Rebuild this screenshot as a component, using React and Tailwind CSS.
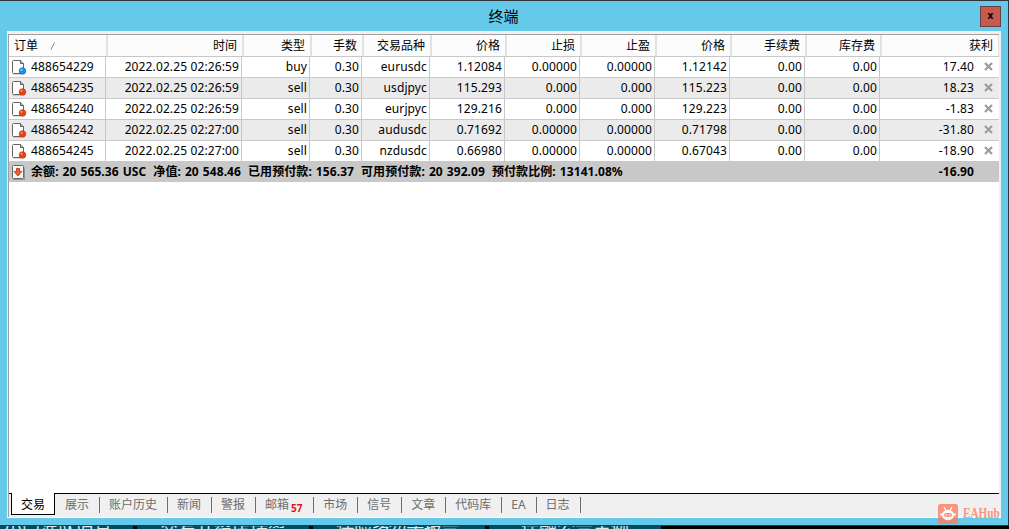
import React, { useState } from 'react';
import clsx from 'clsx';

const columns = [
  { label: '时间', width: 'w-[136px]' },
  { label: '类型', width: 'w-[68px]' },
  { label: '手数', width: 'w-[52px]' },
  { label: '交易品种', width: 'w-[68px]' },
  { label: '价格', width: 'w-[75px]' },
  { label: '止损', width: 'w-[75px]' },
  { label: '止盈', width: 'w-[75px]' },
  { label: '价格', width: 'w-[75px]' },
  { label: '手续费', width: 'w-[75px]' },
  { label: '库存费', width: 'w-[75px]' },
];

const orders = [
  { id: '488654229', values: ['2022.02.25 02:26:59', 'buy', '0.30', 'eurusdc', '1.12084', '0.00000', '0.00000', '1.12142', '0.00', '0.00'], profit: '17.40' },
  { id: '488654235', values: ['2022.02.25 02:26:59', 'sell', '0.30', 'usdjpyc', '115.293', '0.000', '0.000', '115.223', '0.00', '0.00'], profit: '18.23' },
  { id: '488654240', values: ['2022.02.25 02:26:59', 'sell', '0.30', 'eurjpyc', '129.216', '0.000', '0.000', '129.223', '0.00', '0.00'], profit: '-1.83' },
  { id: '488654242', values: ['2022.02.25 02:27:00', 'sell', '0.30', 'audusdc', '0.71692', '0.00000', '0.00000', '0.71798', '0.00', '0.00'], profit: '-31.80' },
  { id: '488654245', values: ['2022.02.25 02:27:00', 'sell', '0.30', 'nzdusdc', '0.66980', '0.00000', '0.00000', '0.67043', '0.00', '0.00'], profit: '-18.90' },
];

const summary = ['余额: 20 565.36 USC', '净值: 20 548.46', '已用预付款: 156.37', '可用预付款: 20 392.09', '预付款比例: 13141.08%'];

const tabs = ['交易', '展示', '账户历史', '新闻', '警报', '邮箱', '市场', '信号', '文章', '代码库', 'EA', '日志'];

const OrderIcon = ({ buy }) => (
  <svg width="16" height="18" viewBox="0 0 16 18" className="shrink-0">
    <path d="M2 16.500h8" stroke="#000" strokeOpacity="0.150" />
    <path d="M1.500 3.500q0-1 1-1h7l3 3v10h-10q-1 0-1-1z" fill="#fff" stroke="#666" strokeLinejoin="round" />
    <path d="M9.500 2.500v3h3" fill="#ccc" stroke="#555" />
    <circle cx="11.500" cy="13" r="3.300" fill={buy ? '#1e93e4' : '#e8430c'} stroke={buy ? '#1268a8' : '#b03a12'} strokeWidth="0.700" />
    <circle cx="10.500" cy="11.800" r="1.100" fill={buy ? '#8fd0fb' : '#ff9a70'} />
  </svg>
);

const BalanceIcon = () => (
  <svg width="16" height="16" viewBox="0 0 16 16" className="shrink-0">
    <path d="M2 15.500h11.500v-12" stroke="#000" strokeOpacity="0.250" fill="none" />
    <rect x="1.500" y="1.500" width="11" height="13" rx="1" fill="#f6f4f2" stroke="#666" />
    <path d="M5.500 4.500h3v3h2.300L7 12 3.200 7.500h2.300z" fill="#f0602c" stroke="#a8300a" strokeWidth="0.800" />
  </svg>
);

const CloseMark = () => (
  <svg width="9" height="9" viewBox="0 0 9 9" className="mb-px shrink-0">
    <path d="M1 1l7 7M8 1l-7 7" stroke="#9c9c9c" strokeWidth="2.200" />
  </svg>
);

const Watermark = () => (
  <div className="absolute left-[938px] top-[504px] flex items-center opacity-80">
    <svg width="20" height="20" viewBox="0 0 20 20">
      <rect width="20" height="20" rx="2.500" fill="#ff7d62" />
      <path d="M8 6.500L6.300 3.500M12 6.500L13.700 3.500" stroke="#fff" strokeWidth="1.300" strokeLinecap="round" />
      <ellipse cx="10" cy="11" rx="6" ry="5.300" fill="#fff" />
      <circle cx="3.500" cy="10.500" r="1.300" fill="#fff" />
      <circle cx="16.500" cy="10.500" r="1.300" fill="#fff" />
      <rect x="6" y="9" width="8" height="4" rx="2" fill="#ff7d62" />
      <circle cx="8.300" cy="11" r="0.800" fill="#fff" />
      <circle cx="11.700" cy="11" r="0.800" fill="#fff" />
    </svg>
    <span className="ml-[5px] origin-left scale-x-[0.8] font-['Liberation_Serif',serif] text-[14px] font-bold leading-5 text-[#ff7d62]">EAHub</span>
  </div>
);

const App = () => {
  const [activeTab, setActiveTab] = useState('交易');

  return (
    <div className="relative flex h-[529px] w-[1009px] flex-col overflow-hidden bg-black font-['Noto_Sans','Noto_Sans_CJK_SC',sans-serif] text-[12px] text-black">
      {/* Terminal window */}
      <div className="flex h-[526px] shrink-0 flex-col border-y border-r border-[#30343c] bg-[#65c9ea] px-[7px] pb-[7px]">
        <div className="flex h-[30px] shrink-0 items-center">
          <div className="w-[973px] pb-px pl-[20px] text-center text-[15px] leading-[28px]">终端</div>
          <button className="flex h-[21px] w-[21px] items-center justify-center border border-[#66413f] bg-[#c45a50] pb-[2px] text-[10px] font-bold leading-none">
            x
          </button>
        </div>

        <div className="flex min-h-0 flex-1 flex-col border-b border-l border-white border-l-[#f0f0f0] bg-[#f0f0f0] pr-[2px] pt-[3px]">
          <div className="flex min-h-0 flex-1 flex-col border-l border-t border-[#a0a0a0] bg-white">
            {/* Column headings */}
            <div className="flex h-[22px] shrink-0 border-b border-[#c8c8c8] bg-[#fcfcfc] leading-[21px]">
              <div className="flex w-[99px] items-center border-r-2 border-[#e2e2e2] pl-[5px]">
                订单
                <svg width="6" height="8" viewBox="0 0 6 8" className="ml-[12px]">
                  <path d="M1 7.500L4.500 0.500" stroke="#888" fill="none" />
                </svg>
              </div>
              {columns.map((col, i) => (
                <div key={i} className={clsx(col.width, 'border-r-2 border-[#e2e2e2] pr-[5px] text-right')}>
                  {col.label}
                </div>
              ))}
              <div className="flex-1 border-r border-[#e2e2e2] pr-[5px] text-right">获利</div>
            </div>

            {/* Open orders */}
            {orders.map((order, i) => (
              <div
                key={order.id}
                className={clsx(
                  'flex shrink-0 leading-[20px] tracking-[0.12px]',
                  i % 2 ? 'bg-[#ebebeb]' : 'bg-white',
                  i < orders.length - 1 ? 'h-[21px] border-b border-[#c8c8c8]' : 'h-[20px]'
                )}
              >
                <div className="flex w-[97px] items-center border-r border-[#c8c8c8] pl-[2px]">
                  <OrderIcon buy={order.values[1] === 'buy'} />
                  <span className="ml-[4px]">{order.id}</span>
                </div>
                {order.values.map((value, n) => (
                  <div key={n} className={clsx(columns[n].width, 'whitespace-nowrap border-r border-[#c8c8c8] pr-[2px] text-right')}>
                    {value}
                  </div>
                ))}
                <div className="flex flex-1 items-center justify-end pr-[6px]">
                  <span className="mr-[10px]">{order.profit}</span>
                  <CloseMark />
                </div>
              </div>
            ))}

            {/* Account summary */}
            <div className="flex h-[21px] shrink-0 items-center bg-[#c8c8c8] pl-[2px] pr-[25px] font-bold tracking-[0.08px]">
              <BalanceIcon />
              <div className="ml-[4px] flex gap-[7px] whitespace-nowrap [word-spacing:0.8px]">
                {summary.map((item) => (
                  <span key={item}>{item}</span>
                ))}
              </div>
              <span className="ml-auto">-16.90</span>
            </div>

            <div className="flex-1" />

            {/* Bottom tabs */}
            <div className="flex h-[24px] shrink-0 bg-[#f0f0f0] text-[#6d6d6d]">
              <div className="w-[2px] border-t border-black" />
              {tabs.map((tab) => (
                <button
                  key={tab}
                  onClick={() => setActiveTab(tab)}
                  className={clsx(
                    'flex shrink-0 border-black',
                    tab === activeTab
                      ? 'h-[22px] border-x border-b bg-white px-[9px] leading-[23px] text-black'
                      : 'border-t'
                  )}
                >
                  {tab === activeTab ? tab : (
                    <span className={clsx('mt-[3px] flex h-[16px] border-r border-[#6d6d6d] pr-[10px] leading-[15px]', tab === '展示' ? 'pl-[10px]' : 'pl-[9px]')}>
                      {tab}
                      {tab === '邮箱' && (
                        <sub className="bottom-0 ml-[2px] mr-[0.6px] mt-[4px] text-[10px] font-bold leading-[15px] text-[#e81123]">57</sub>
                      )}
                    </span>
                  )}
                </button>
              ))}
              <div className="flex-1 border-t border-black" />
            </div>
          </div>
        </div>
      </div>

      {/* Chart tabs hidden behind the terminal */}
      <div className="flex h-[3px] shrink-0 gap-[4px] overflow-hidden text-center text-[18px] leading-[3px] text-[#dce8ec]">
        <div className="w-[133px] whitespace-nowrap bg-[#004d66] pr-[17px]">小门准队旧息</div>
        <div className="w-[172px] whitespace-nowrap bg-[#004d66]">交易介绍店瑞盈</div>
        <div className="w-[172px] whitespace-nowrap bg-[#004d66] pr-[3px] tracking-[-0.6px]">保险多勿头报告</div>
        <div className="w-[172px] whitespace-nowrap bg-[#004d66]">佳融公告主例</div>
      </div>

      <Watermark />
    </div>
  );
};

export default App;
